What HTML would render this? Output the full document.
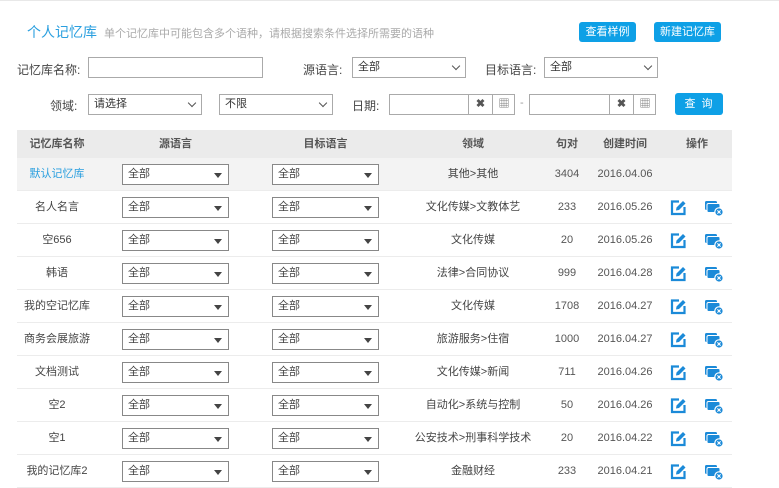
<!DOCTYPE html>
<html><head><meta charset="utf-8"><style>
*{margin:0;padding:0;box-sizing:border-box}
body{width:779px;height:487px;overflow:hidden;background:#fff;font-family:"Liberation Sans","Noto Sans CJK SC",sans-serif;font-size:11px;color:#444;position:relative}
.a{position:absolute}
.inp{position:absolute;border:1px solid #aaa;background:#fff;height:21px;font-size:11px;line-height:19px;padding-left:5px;color:#333}
.chev{position:absolute;right:6px;top:5px;width:6px;height:6px;border-right:1.3px solid #555;border-bottom:1.3px solid #555;transform:rotate(45deg)}
.btn{position:absolute;background:#0ea0e6;color:#fff;border-radius:3px;text-align:center;font-size:11px}
.sel{position:absolute;border:1px solid #888;background:#fff;height:21px;width:107px;line-height:19px;padding-left:5px;font-size:11px}
.tri{position:absolute;right:6px;top:8px;border-left:4px solid transparent;border-right:4px solid transparent;border-top:5px solid #444}
.row{position:absolute;left:17px;width:715px;height:33px;border-bottom:1px solid #ececec}
.c{position:absolute;text-align:center;top:0;line-height:32px}
.lbl{position:absolute;font-size:12px;color:#444}
</style></head><body>
<div class="a" style="left:0;top:0;width:779px;height:1px;background:#e8e8e8"></div>
<div class="a" style="left:27px;top:22px;font-size:14px;color:#2a9fdf">个人记忆库</div>
<div class="a" style="left:104px;top:25px;font-size:11px;color:#aaa">单个记忆库中可能包含多个语种，请根据搜索条件选择所需要的语种</div>
<div class="btn" style="left:579px;top:22px;width:57px;height:20px;line-height:20px">查看样例</div>
<div class="btn" style="left:654px;top:22px;width:67px;height:20px;line-height:20px">新建记忆库</div>

<div class="lbl" style="left:17px;top:61px">记忆库名称:</div>
<div class="inp" style="left:88px;top:57px;width:175px"></div>
<div class="lbl" style="left:303px;top:61px">源语言:</div>
<div class="inp" style="left:352px;top:57px;width:114px">全部<i class="chev"></i></div>
<div class="lbl" style="left:485px;top:61px">目标语言:</div>
<div class="inp" style="left:544px;top:57px;width:114px">全部<i class="chev"></i></div>

<div class="lbl" style="left:50px;top:97px">领域:</div>
<div class="inp" style="left:88px;top:94px;width:114px">请选择<i class="chev"></i></div>
<div class="inp" style="left:219px;top:94px;width:114px">不限<i class="chev"></i></div>
<div class="lbl" style="left:352px;top:97px">日期:</div>
<div class="inp" style="left:389px;top:94px;width:126px;padding:0"><span class="a" style="left:78px;top:0;width:24px;height:19px;border-left:1px solid #aaa;text-align:center;font-weight:bold;color:#555">✖</span><span class="a" style="left:102px;top:0;width:23px;height:19px;border-left:1px solid #aaa;text-align:center;color:#666">▦</span></div>
<div class="a" style="left:520px;top:97px;color:#999">-</div>
<div class="inp" style="left:529px;top:94px;width:127px;padding:0"><span class="a" style="left:79px;top:0;width:24px;height:19px;border-left:1px solid #aaa;text-align:center;font-weight:bold;color:#555">✖</span><span class="a" style="left:103px;top:0;width:23px;height:19px;border-left:1px solid #aaa;text-align:center;color:#666">▦</span></div>
<div class="btn" style="left:675px;top:93px;width:48px;height:22px;line-height:22px;letter-spacing:6px;padding-left:5px">查询</div>

<div class="a" style="left:17px;top:130px;width:715px;height:28px;background:#ebebeb;font-weight:bold;color:#555">
<div class="c" style="left:0;width:80px;line-height:28px">记忆库名称</div>
<div class="c" style="left:105px;width:107px;line-height:28px">源语言</div>
<div class="c" style="left:255px;width:107px;line-height:28px">目标语言</div>
<div class="c" style="left:406px;width:100px;line-height:28px">领域</div>
<div class="c" style="left:530px;width:40px;line-height:28px">句对</div>
<div class="c" style="left:578px;width:60px;line-height:28px">创建时间</div>
<div class="c" style="left:660px;width:40px;line-height:28px">操作</div>
</div>
<div id="rows"></div>
<script>
var d=[["默认记忆库","其他>其他","3404","2016.04.06"],["名人名言","文化传媒>文教体艺","233","2016.05.26"],["空656","文化传媒","20","2016.05.26"],["韩语","法律>合同协议","999","2016.04.28"],["我的空记忆库","文化传媒","1708","2016.04.27"],["商务会展旅游","旅游服务>住宿","1000","2016.04.27"],["文档测试","文化传媒>新闻","711","2016.04.26"],["空2","自动化>系统与控制","50","2016.04.26"],["空1","公安技术>刑事科学技术","20","2016.04.22"],["我的记忆库2","金融财经","233","2016.04.21"]];
var h="";
d.forEach(function(r,i){
var t=158+i*33;
h+='<div class="row" style="top:'+t+'px;'+(i==0?'background:#f3f3f3':'')+'">'+
'<div class="c" style="left:0;width:80px;'+(i==0?'color:#2a9fdf':'')+'">'+r[0]+'</div>'+
'<div class="sel" style="left:105px;top:6px">全部<i class="tri"></i></div>'+
'<div class="sel" style="left:255px;top:6px">全部<i class="tri"></i></div>'+
'<div class="c" style="left:396px;width:120px">'+r[1]+'</div>'+
'<div class="c" style="left:530px;width:40px;color:#555">'+r[2]+'</div>'+
'<div class="c" style="left:578px;width:60px;color:#555">'+r[3]+'</div>'+
(i>0?'<svg class="a" style="left:653px;top:8px" width="17" height="17" viewBox="0 0 17 17"><path d="M9 2.5 H2 V15 H14.5 V8" fill="none" stroke="#1b8ad8" stroke-width="2.2"/><path d="M6 11.5 L6.5 8.5 L13 2 L15.5 4.5 L9 11Z" fill="#1b8ad8"/></svg>'+
'<svg class="a" style="left:687px;top:8px" width="20" height="18" viewBox="0 0 20 18"><rect x="1" y="2" width="12" height="9" rx="1.5" fill="#1b8ad8"/><rect x="3" y="4.5" width="13" height="9" rx="1.5" fill="#1b8ad8" stroke="#fff" stroke-width="1"/><circle cx="15" cy="13" r="4.2" fill="#1b8ad8" stroke="#fff" stroke-width="1.2"/><path d="M13.4 11.4 l3.2 3.2 M16.6 11.4 l-3.2 3.2" stroke="#fff" stroke-width="1.1"/></svg>':'')+
'</div>';});
document.getElementById("rows").innerHTML=h;
</script>
</body></html>
